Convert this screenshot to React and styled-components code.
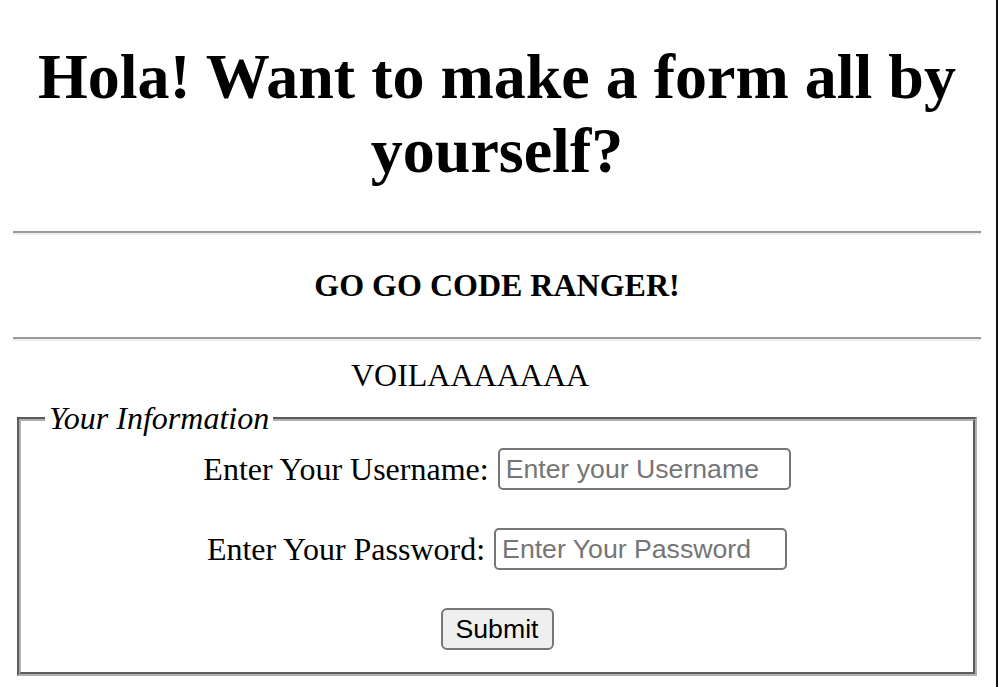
import styled, { createGlobalStyle } from 'styled-components';

const GlobalStyle = createGlobalStyle`
  html, body {
    margin: 0;
    padding: 0;
    background: #fff;
  }
  body {
    font-family: "Liberation Serif", "Times New Roman", serif;
    color: #000;
  }
`;

export default function App() {
  return (
    <>
      <GlobalStyle />
      <Page>
        <Title>Hola! Want to make a form all by yourself?</Title>
        <Rule />
        <Tagline>GO GO CODE RANGER!</Tagline>
        <Rule />
        <Voila>VOILAAAAAAA</Voila>
        <Fieldset>
          <Legend>Your Information</Legend>
          <Row>
            <Label htmlFor="username">Enter Your Username:</Label>
            <Input id="username" type="text" placeholder="Enter your Username" />
          </Row>
          <Row>
            <Label htmlFor="password">Enter Your Password:</Label>
            <Input id="password" type="password" placeholder="Enter Your Password" />
          </Row>
          <Row>
            <SubmitBtn type="submit">Submit</SubmitBtn>
          </Row>
        </Fieldset>
      </Page>
    </>
  );
}

const Page = styled.div`
  box-sizing: border-box;
  width: 998px;
  min-height: 687px;
  padding: 40px 15px 0 13px;
  border-right: 2px solid #111;
  display: flex;
  flex-direction: column;
`;

const Title = styled.h1`
  margin: 0 0 44px;
  font-size: 64px;
  font-weight: 700;
  line-height: 73.5px;
  text-align: center;
`;

const Rule = styled.hr`
  margin: 0;
  height: 0;
  border: none;
  border-top: 2px solid #9a9a9a;
  border-bottom: 2px solid #eeeeee;
`;

const Tagline = styled.p`
  margin: 32px 0 33px;
  font-size: 32px;
  font-weight: 700;
  line-height: 37px;
  text-align: center;
`;

const Voila = styled.div`
  margin-top: 16px;
  padding-right: 54px;
  font-size: 32px;
  line-height: 37px;
  text-align: center;
`;

const Fieldset = styled.fieldset`
  margin: 6px 4px 0;
  padding: 11px 24px 22px;
  border: 4px groove #b0b0b0;
  display: flex;
  flex-direction: column;
  align-items: center;
  gap: 38px;
`;

const Legend = styled.legend`
  padding: 0 4px;
  font-size: 32px;
  font-style: italic;
  line-height: 37px;
`;

const Row = styled.div`
  display: flex;
  align-items: center;
  justify-content: center;
  gap: 9px;
  height: 42px;
`;

const Label = styled.label`
  font-size: 32px;
  line-height: 37px;
`;

const Input = styled.input`
  box-sizing: border-box;
  width: 293px;
  height: 42px;
  padding: 2px 6px;
  border: 2px solid #767676;
  border-radius: 5px;
  font-family: "Liberation Sans", Arial, sans-serif;
  font-size: 26.67px;
  color: #000;
  background: #fff;

  &::placeholder {
    color: #757575;
  }
`;

const SubmitBtn = styled.button`
  box-sizing: border-box;
  width: 113px;
  height: 42px;
  padding: 2px 12px;
  border: 2px solid #767676;
  border-radius: 6px;
  background: #efefef;
  font-family: "Liberation Sans", Arial, sans-serif;
  font-size: 26.67px;
  color: #000;
`;
